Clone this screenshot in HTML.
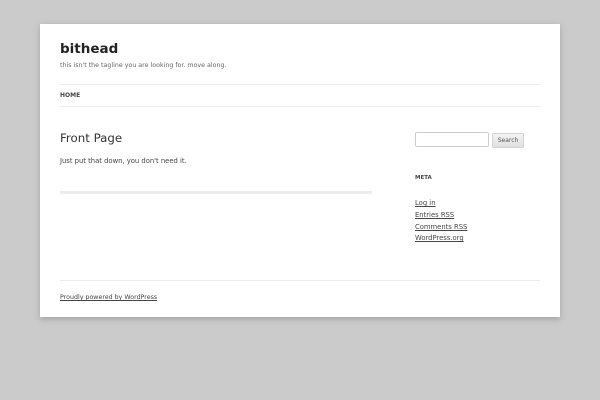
<!DOCTYPE html>
<html><head><meta charset="utf-8"><style>
*{margin:0;padding:0;box-sizing:border-box}
body{width:600px;height:400px;background:#cbcbcb;font-family:"DejaVu Sans","Liberation Sans",sans-serif;color:#444;position:relative;overflow:hidden}
.page{position:absolute;left:40px;top:24px;width:520px;height:293px;background:#fff;box-shadow:0 2px 6px rgba(100,100,100,.4)}
.abs{position:absolute;white-space:nowrap}
a{color:#444}
</style></head><body>
<div class="page">
<div class="abs" style="left:20px;top:17px;font-size:13.5px;font-weight:bold;color:#222">bithead</div>
<div class="abs" style="left:20px;top:38px;font-size:6.3px;color:#666">this isn't the tagline you are looking for. move along.</div>
<div class="abs" style="left:20px;top:60px;width:480px;border-top:1px solid #ededed"></div>
<div class="abs" style="left:20px;top:68px;font-size:6px;font-weight:bold;color:#444">HOME</div>
<div class="abs" style="left:20px;top:82px;width:480px;border-top:1px solid #ededed"></div>
<div class="abs" style="left:20px;top:107px;font-size:11.8px;color:#333">Front Page</div>
<div class="abs" style="left:20px;top:133px;font-size:6.8px;color:#444">Just put that down, you don't need it.</div>
<div class="abs" style="left:20px;top:167px;width:312px;height:3px;background:#ededed"></div>
<div class="abs" style="left:375px;top:108px;width:74px;height:15px;border:1px solid #ccc;border-radius:2px"></div>
<div class="abs" style="left:452px;top:109px;width:32px;height:15px;border:1px solid #d2d2d2;border-radius:2px;background:linear-gradient(#f4f4f4,#e0e0e0);font-size:6px;color:#555;text-align:center;line-height:13px">Search</div>
<div class="abs" style="left:375px;top:151px;font-size:5.5px;font-weight:bold;color:#444">META</div>
<div class="abs" style="left:375px;top:174px;font-size:6.8px;line-height:11.8px"><a href="#">Log in</a><br><a href="#">Entries RSS</a><br><a href="#">Comments RSS</a><br><a href="#">WordPress.org</a></div>
<div class="abs" style="left:20px;top:256px;width:480px;border-top:1px solid #ededed"></div>
<div class="abs" style="left:20px;top:270px;font-size:6.3px"><a href="#">Proudly powered by WordPress</a></div>
</div>
</body></html>
